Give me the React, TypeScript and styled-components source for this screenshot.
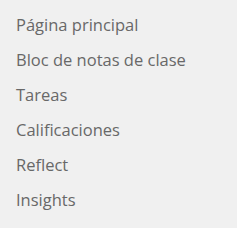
import React from "react";
import styled, { createGlobalStyle } from "styled-components";

const GlobalStyle = createGlobalStyle`
  html, body {
    margin: 0;
    padding: 0;
    background: #f0f0f0;
  }
`;

const items = [
  "Página principal",
  "Bloc de notas de clase",
  "Tareas",
  "Calificaciones",
  "Reflect",
  "Insights",
];

const Nav = styled.nav`
  width: 237px;
  height: 228px;
  background: #f0f0f0;
  padding: 7px 0 0 16px;
  box-sizing: border-box;
  display: flex;
  flex-direction: column;
`;

const NavItem = styled.div`
  height: 35px;
  line-height: 35px;
  font-family: "Open Sans", "Noto Sans", sans-serif;
  font-size: 16.5px;
  color: #686868;
  white-space: nowrap;
`;

export default function App() {
  return (
    <>
      <GlobalStyle />
      <Nav>
        {items.map((label) => (
          <NavItem key={label}>{label}</NavItem>
        ))}
      </Nav>
    </>
  );
}
